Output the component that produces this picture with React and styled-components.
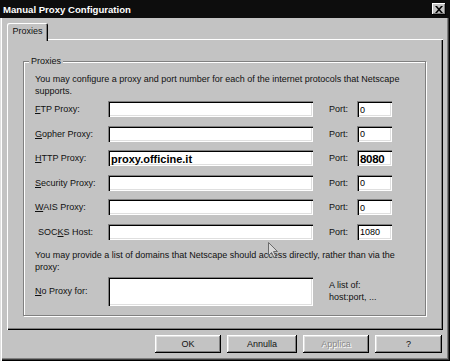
import React from 'react';
import styled, { createGlobalStyle } from 'styled-components';

const Global = createGlobalStyle`
  html, body { margin: 0; padding: 0; background: #c3c3c3; }
  body { font-family: "Liberation Sans", Arial, sans-serif; }
  * { box-sizing: border-box; }
`;

const Window = styled.div`
  position: relative;
  width: 450px;
  height: 361px;
  display: flex;
  flex-direction: column;
  background: #c3c3c3;
  color: #111;
  font-size: 9px;
  overflow: hidden;
`;

const TitleBar = styled.div`
  height: 18px;
  flex: none;
  background: #0d0d0d;
  display: flex;
  align-items: center;
  justify-content: space-between;
  padding: 0 4px 0 3px;
`;

const Title = styled.span`
  color: #fff;
  font-weight: bold;
  font-size: 9.6px;
`;

const CloseBtn = styled.div`
  width: 14px;
  height: 12px;
  background: #c3c3c3;
  box-shadow: inset -1px -1px #000, inset 1px 1px #fff, inset -2px -2px #808080;
  display: flex;
  align-items: center;
  justify-content: center;
`;

const Body = styled.div`
  flex: 1;
  display: flex;
  flex-direction: column;
  padding: 5px 7px 0 7px;
  box-shadow: inset 1px 0 #dfdfdf, inset 2px 0 #fff, inset -1px -1px #000,
    inset -2px -2px #3a3a3a, inset -3px -3px #808080;
`;

const TabStrip = styled.div`
  display: flex;
  height: 17px;
  flex: none;
  position: relative;
  z-index: 1;
  margin-bottom: -1px;
`;

const Tab = styled.div`
  width: 41px;
  height: 18px;
  display: flex;
  align-items: center;
  justify-content: center;
  padding-bottom: 2px;
  background: #c3c3c3;
  border-radius: 2px 2px 0 0;
  box-shadow: inset 1px 1px #fff, inset -1px 0 #000, inset -2px 0 #808080;
`;

const Panel = styled.div`
  height: 291px;
  flex: none;
  padding: 22px 17px 14px 16px;
  box-shadow: inset 1px 1px #fff, inset -1px -1px #000, inset -2px -2px #808080;
`;

const Group = styled.div`
  position: relative;
  height: 255px;
  border: 1px solid #808080;
  box-shadow: inset 1px 1px #fff, 1px 1px #fff;
  padding: 11px 10px 0 11px;
  display: flex;
  flex-direction: column;
`;

const Legend = styled.span`
  position: absolute;
  top: -6px;
  left: 5px;
  padding: 0 2px;
  background: #c3c3c3;
  line-height: 11px;
`;

const Para = styled.p`
  margin: 0;
  line-height: 12px;
  margin-top: ${(p) => p.$top || 0}px;
`;

const Rows = styled.div`
  display: flex;
  flex-direction: column;
  gap: 8.5px;
  margin-top: 4px;
`;

const Row = styled.div`
  display: flex;
  align-items: center;
  height: ${(p) => p.$h || 16}px;
  margin-top: ${(p) => p.$top || 0}px;
`;

const Label = styled.span`
  width: 73px;
  flex: none;
  padding-left: ${(p) => p.$indent || 0}px;
`;

const Field = styled.div`
  width: ${(p) => p.$w}px;
  height: 100%;
  flex: none;
  background: #fff;
  box-shadow: inset 1px 1px #808080, inset 2px 2px #000, inset -1px -1px #fff,
    inset -2px -2px #dfdfdf;
  display: flex;
  align-items: center;
  padding-left: 3px;
  padding-top: 1px;
  font-size: ${(p) => p.$size || 9}px;
  font-weight: ${(p) => (p.$bold ? 'bold' : 'normal')};
  letter-spacing: ${(p) => p.$ls || 0}px;
  color: #000;
  white-space: nowrap;
  overflow: hidden;
`;

const PortLabel = styled.span`
  width: 28px;
  margin-left: 16px;
  flex: none;
`;

const Note = styled.div`
  margin-left: 16px;
  line-height: 12px;
`;

const ButtonRow = styled.div`
  display: flex;
  justify-content: flex-end;
  gap: 6px;
  margin-top: 5px;
  padding-right: 1px;
`;

const Button = styled.div`
  width: ${(p) => p.$w || 67}px;
  height: 18px;
  display: flex;
  align-items: center;
  justify-content: center;
  background: #c3c3c3;
  box-shadow: inset -1px -1px #000, inset 1px 1px #fff, inset -2px -2px #808080,
    inset 2px 2px #dfdfdf;
  color: ${(p) => (p.$disabled ? '#8a8a8a' : '#111')};
  text-shadow: ${(p) => (p.$disabled ? '1px 1px 0 #fff' : 'none')};
`;

const Cursor = styled.svg`
  position: absolute;
  left: 268px;
  top: 242px;
`;

const rows = [
  { u: 'F', rest: 'TP Proxy:', port: '0' },
  { u: 'G', rest: 'opher Proxy:', port: '0' },
  { u: 'H', rest: 'TTP Proxy:', value: 'proxy.officine.it', port: '8080', bold: true },
  { u: 'S', rest: 'ecurity Proxy:', port: '0' },
  { u: 'W', rest: 'AIS Proxy:', port: '0' },
  { pre: 'SOC', u: 'K', rest: 'S Host:', port: '1080', indent: 3 },
];

export default function App() {
  return (
    <Window>
      <Global />
      <TitleBar>
        <Title>Manual Proxy Configuration</Title>
        <CloseBtn>
          <svg width="8" height="7" viewBox="0 0 8 7">
            <path d="M0 0h2l2 2.3L6 0h2L5 3.5 8 7H6L4 4.7 2 7H0l3-3.5z" fill="#000" />
          </svg>
        </CloseBtn>
      </TitleBar>
      <Body>
        <TabStrip>
          <Tab>Proxies</Tab>
        </TabStrip>
        <Panel>
          <Group>
            <Legend>Proxies</Legend>
            <Para>
              You may configure a proxy and port number for each of the internet protocols that Netscape
              <br />
              supports.
            </Para>
            <Rows>
              {rows.map((r, i) => (
                <Row key={i}>
                  <Label $indent={r.indent}>
                    {r.pre}
                    <u>{r.u}</u>
                    {r.rest}
                  </Label>
                  <Field $w={205} $bold={r.bold} $size={r.bold ? 11 : 9}>
                    {r.value}
                  </Field>
                  <PortLabel>Port:</PortLabel>
                  <Field $w={35} $bold={r.bold} $size={r.bold ? 11.5 : 9} $ls={r.bold ? -0.3 : 0}>
                    {r.port}
                  </Field>
                </Row>
              ))}
            </Rows>
            <Para $top={9}>
              You may provide a list of domains that Netscape should access directly, rather than via the
              <br />
              proxy:
            </Para>
            <Row $h={29} $top={4}>
              <Label>
                <u>N</u>o Proxy for:
              </Label>
              <Field $w={205} />
              <Note>
                A list of:
                <br />
                host:port, ...
              </Note>
            </Row>
          </Group>
        </Panel>
        <ButtonRow>
          <Button $w={66}>OK</Button>
          <Button $w={70}>Annulla</Button>
          <Button $w={66} $disabled>
            Applica
          </Button>
          <Button $w={67}>?</Button>
        </ButtonRow>
      </Body>
      <Cursor width="11" height="16" viewBox="0 0 11 16">
        <path d="M0.5 0.5v13l3-3 2.5 5 2-1-2.5-5h4z" fill="#d8d8d8" stroke="#6a6a6a" strokeWidth="1" />
      </Cursor>
    </Window>
  );
}
